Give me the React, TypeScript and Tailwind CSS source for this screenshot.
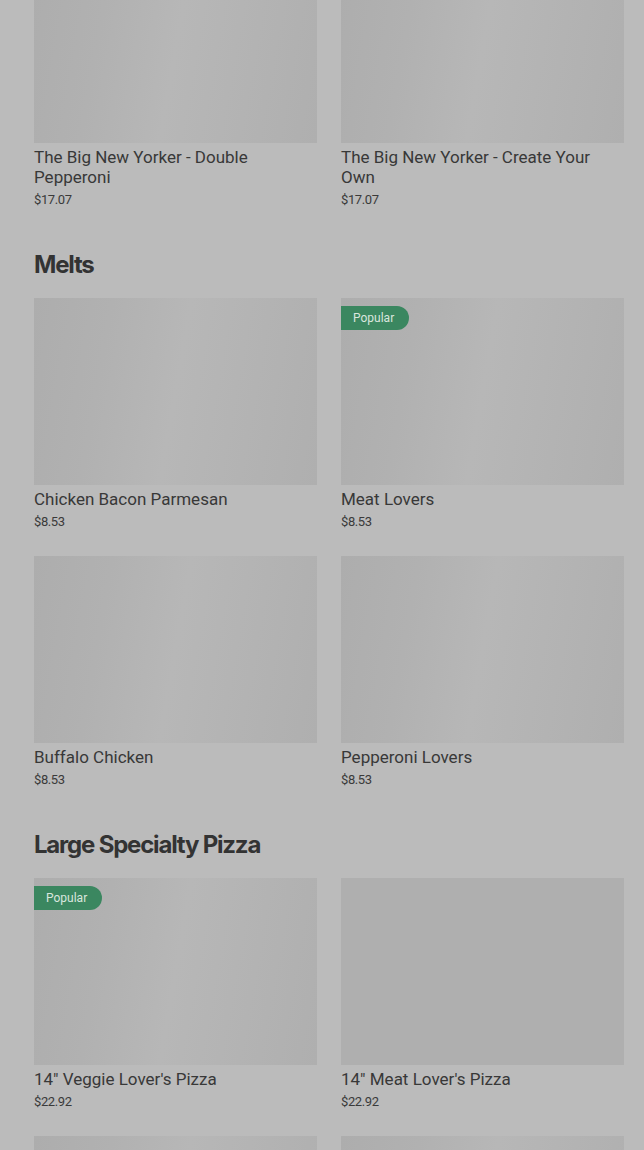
type Item = { name: string; price: string; popular?: boolean; flat?: boolean };

const sections: { title?: string; items: Item[] }[] = [
  {
    items: [
      { name: 'The Big New Yorker - Double Pepperoni', price: '$17.07' },
      { name: 'The Big New Yorker - Create Your Own', price: '$17.07' },
    ],
  },
  {
    title: 'Melts',
    items: [
      { name: 'Chicken Bacon Parmesan', price: '$8.53' },
      { name: 'Meat Lovers', price: '$8.53', popular: true },
      { name: 'Buffalo Chicken', price: '$8.53' },
      { name: 'Pepperoni Lovers', price: '$8.53' },
    ],
  },
  {
    title: 'Large Specialty Pizza',
    items: [
      { name: '14" Veggie Lover\'s Pizza', price: '$22.92', popular: true },
      { name: '14" Meat Lover\'s Pizza', price: '$22.92', flat: true },
      { name: '14" Supreme Pizza', price: '$22.92' },
      { name: '14" Pepperoni Lover\'s Pizza', price: '$22.92' },
    ],
  },
];

const Card = ({ item }: { item: Item }) => (
  <div className="flex flex-col">
    <div
      className={
        item.flat
          ? 'relative h-[187px] bg-[#afafaf]'
          : 'relative h-[187px] bg-[linear-gradient(100deg,#adadad_0%,#b1b1b1_25%,#b7b7b7_50%,#b3b3b3_75%,#afafaf_100%)]'
      }
    >
      {item.popular && (
        <span className="absolute left-0 top-2 h-6 pl-3 pr-[15px] flex items-center rounded-r-full bg-[#3b8760] text-[12px] text-[#d9e6de]">
          Popular
        </span>
      )}
    </div>
    <div className="mt-1 text-[17px] leading-5 text-[#383838] pr-6">{item.name}</div>
    <div className="mt-1 text-[13px] leading-[18px] tracking-[-0.4px] text-[#3a3a3a]">{item.price}</div>
  </div>
);

const App = () => {
  return (
    <div className="min-h-screen bg-[#bbbbbb] overflow-hidden font-['Roboto','Liberation_Sans',sans-serif]">
      <div className="-mt-[44px] pl-[34px] pr-[20px]">
        {sections.map((s, i) => (
          <div key={i} className={i > 0 ? 'pt-10' : ''}>
            {s.title && (
              <h2 className="mb-[17px] text-[24px] leading-8 font-bold tracking-[-1.2px] text-[#333333] font-['Inter','Liberation_Sans',sans-serif]">
                {s.title}
              </h2>
            )}
            <div className="grid grid-cols-2 gap-x-6 gap-y-[25px]">
              {s.items.map((it) => (
                <Card key={it.name} item={it} />
              ))}
            </div>
          </div>
        ))}
      </div>
    </div>
  );
};

export default App;
